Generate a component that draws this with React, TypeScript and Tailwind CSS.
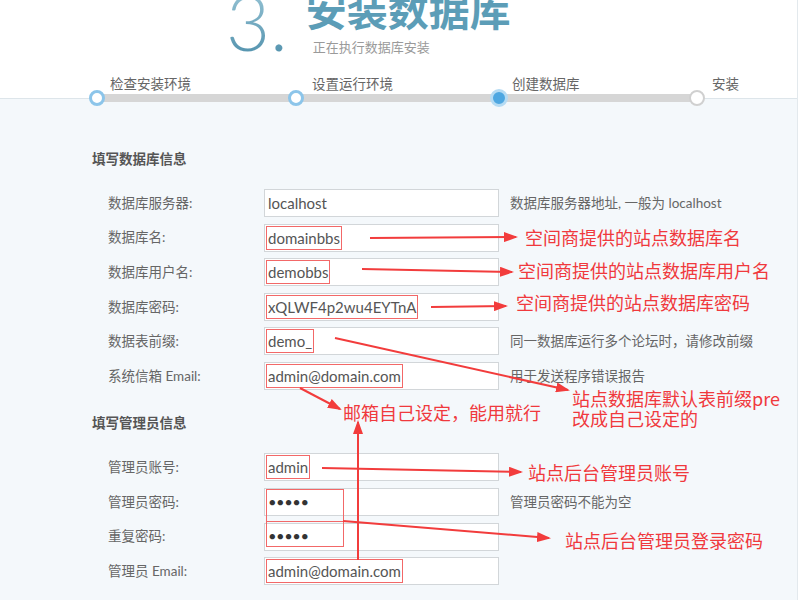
import React from "react";

const dbRows = [
  { label: "数据库服务器:", value: "localhost", boxed: false, hint: "数据库服务器地址, 一般为 localhost" },
  { label: "数据库名:", value: "domainbbs", boxed: true, hint: "" },
  { label: "数据库用户名:", value: "demobbs", boxed: true, hint: "" },
  { label: "数据库密码:", value: "xQLWF4p2wu4EYTnA", boxed: true, hint: "" },
  { label: "数据表前缀:", value: "demo_", boxed: true, hint: "同一数据库运行多个论坛时，请修改前缀" },
  { label: "系统信箱 Email:", value: "admin@domain.com", boxed: true, hint: "用于发送程序错误报告" },
];

const adminRows = [
  { label: "管理员账号:", value: "admin", boxed: true, hint: "" },
  { label: "管理员密码:", value: "●●●●●", boxed: false, dots: true, hint: "管理员密码不能为空" },
  { label: "重复密码:", value: "●●●●●", boxed: false, dots: true, hint: "" },
  { label: "管理员 Email:", value: "admin@domain.com", boxed: true, hint: "" },
];

type Row = { label: string; value: string; boxed: boolean; hint: string; dots?: boolean };

function FormRow({ row }: { row: Row }) {
  return (
    <div className="flex items-center h-[28px]">
      <div className="w-[172px] shrink-0 pl-[16px] text-[13.5px] text-[#666]">{row.label}</div>
      <div className="w-[235px] h-[28px] shrink-0 bg-white border border-[#d2d6d9] p-[1px] flex items-center">
        {row.boxed ? (
          <span className="h-[24px] leading-[22px] border border-[#f26868] px-[1px] text-[15px] text-[#555]">
            {row.value}
          </span>
        ) : row.dots ? (
          <span className="pl-[3px] text-[11px] tracking-[1.5px] text-[#333]">{row.value}</span>
        ) : (
          <span className="pl-[2px] text-[15px] text-[#555]">{row.value}</span>
        )}
      </div>
      {row.hint && <div className="ml-[11px] text-[13.5px] text-[#666]">{row.hint}</div>}
    </div>
  );
}

const steps = ["检查安装环境", "设置运行环境", "创建数据库", "安装"];

export default function App() {
  return (
    <div className="w-[800px] h-[600px] overflow-hidden bg-white font-['Lato','Noto_Sans_CJK_SC',sans-serif]">
      <div className="relative w-[798px] h-[600px] border-r border-[#e3e9ed] bg-[#f4f8fb]">
        {/* 头部 */}
        <div className="h-[99px] bg-white border-b border-[#dde5ea]">
          <div className="flex pl-[226px] h-[76px] overflow-hidden">
            <div className="-mt-[16px] text-[76px] leading-none font-light bg-gradient-to-b from-[#9cc8d8] to-[#3d84a2] bg-clip-text text-transparent">
              3.
            </div>
            <div className="ml-[18px]">
              <h1 className="-mt-[12px] text-[41px] leading-none font-bold text-[#5c9db7] font-['Noto_Sans_CJK_SC',sans-serif]">
                安装数据库
              </h1>
              <p className="mt-[9px] ml-[7px] text-[13px] text-[#9a9a9a]">正在执行数据库安装</p>
            </div>
          </div>
          <div className="flex pl-[110px]">
            <div className="w-[202px] shrink-0 text-[13.5px] leading-[16px] text-[#666]">{steps[0]}</div>
            <div className="w-[200px] shrink-0 text-[13.5px] leading-[16px] text-[#666]">{steps[1]}</div>
            <div className="w-[200px] shrink-0 text-[13.5px] leading-[16px] text-[#666]">{steps[2]}</div>
            <div className="w-[100px] shrink-0 text-[13.5px] leading-[16px] text-[#666]">{steps[3]}</div>
          </div>
        </div>
        {/* 步骤条 */}
        <div className="relative -mt-[9px] h-[16px]">
          <div className="absolute left-[97px] top-[4px] w-[600px] h-[8px] bg-[#d6d6d6]" />
          <div className="relative flex pl-[89px]">
            <div className="w-[199px] shrink-0">
              <div className="w-[16px] h-[16px] rounded-full bg-white border-[3px] border-[#8cc5ea]" />
            </div>
            <div className="w-[203px] shrink-0">
              <div className="w-[16px] h-[16px] rounded-full bg-white border-[3px] border-[#8cc5ea]" />
            </div>
            <div className="w-[198px] shrink-0">
              <div className="-ml-[1px] -mt-[1px] w-[18px] h-[18px] rounded-full bg-[#4ea7e1] border-[3px] border-[#b5dbf3]" />
            </div>
            <div className="w-[100px] shrink-0">
              <div className="w-[16px] h-[16px] rounded-full bg-white border-[2px] border-[#d0d0d0]" />
            </div>
          </div>
        </div>

        {/* 表单 */}
        <div className="pl-[92px] pt-[43px]">
          <h3 className="text-[13.5px] leading-[20px] font-bold text-[#555]">填写数据库信息</h3>
          <div className="mt-[20px] flex flex-col gap-[6.6px]">
            {dbRows.map((r, i) => (
              <FormRow key={i} row={r} />
            ))}
          </div>
          <h3 className="mt-[23px] text-[13.5px] leading-[20px] font-bold text-[#555]">填写管理员信息</h3>
          <div className="mt-[20px] flex flex-col gap-[6.8px]">
            {adminRows.map((r, i) => (
              <FormRow key={i} row={r} />
            ))}
          </div>
        </div>

        {/* 标注 */}
        <div className="absolute left-[266px] top-[489px] w-[78px] h-[33px] border border-[#f26868]" />
        <div className="absolute left-[266px] top-[521px] w-[78px] h-[26px] border border-[#f26868]" />

        <svg className="absolute left-0 top-0 pointer-events-none" width="800" height="600">
          <defs>
            <marker id="ah" markerWidth="14" markerHeight="10" refX="12" refY="5" orient="auto" markerUnits="userSpaceOnUse">
              <path d="M0,0 L14,5 L0,10 z" fill="#f23c3c" />
            </marker>
          </defs>
          <g stroke="#f23c3c" strokeWidth="2" fill="none" markerEnd="url(#ah)">
            <line x1="370" y1="238" x2="516" y2="237" />
            <line x1="362" y1="269" x2="512" y2="272" />
            <line x1="431" y1="307" x2="506" y2="306" />
            <line x1="335" y1="338" x2="568" y2="390" />
            <line x1="300" y1="388" x2="340" y2="409" />
            <line x1="358" y1="560" x2="358" y2="422" />
            <line x1="322" y1="468" x2="521" y2="472" />
            <line x1="343" y1="521" x2="549" y2="538" />
          </g>
        </svg>

        <div className="absolute inset-0 pointer-events-none text-[18px] leading-[20px] text-[#f0393d] font-['Noto_Sans_CJK_SC',sans-serif]">
          <div className="absolute left-[525px] top-[227px]">空间商提供的站点数据库名</div>
          <div className="absolute left-[518px] top-[260px]">空间商提供的站点数据库用户名</div>
          <div className="absolute left-[516px] top-[292px]">空间商提供的站点数据库密码</div>
          <div className="absolute left-[572px] top-[388px]">
            站点数据库默认表前缀pre
            <br />
            改成自己设定的
          </div>
          <div className="absolute left-[343px] top-[402px]">邮箱自己设定，能用就行</div>
          <div className="absolute left-[528px] top-[462px]">站点后台管理员账号</div>
          <div className="absolute left-[565px] top-[530px]">站点后台管理员登录密码</div>
        </div>
      </div>
    </div>
  );
}
